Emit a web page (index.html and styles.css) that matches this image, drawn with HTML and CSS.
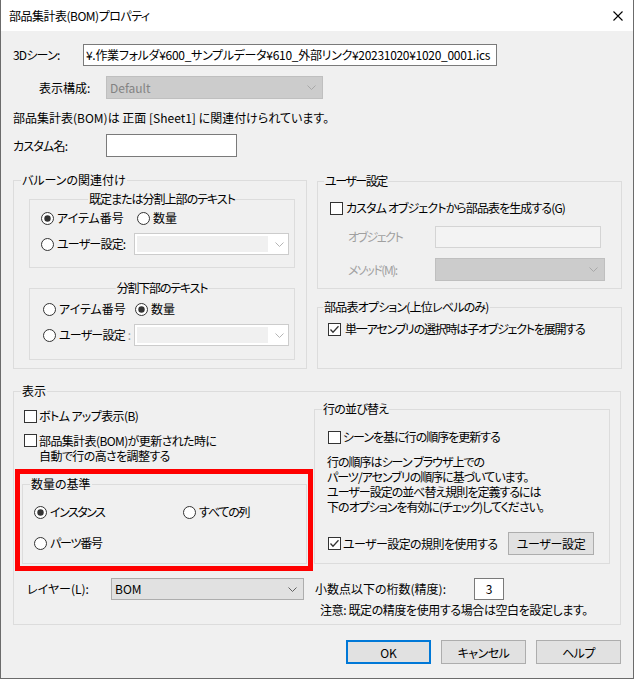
FILE: index.html
```html
<!DOCTYPE html>
<html lang="ja">
<head>
<meta charset="utf-8">
<title>部品集計表(BOM)プロパティ</title>
<link rel="stylesheet" href="styles.css">
</head>
<body>
<div class="window">
  <div class="titlebar">
    <span class="title t5">部品集計表(BOM)プロパティ</span>
    <svg class="close" width="10" height="10" viewBox="0 0 10 10"><path d="M0.5 0.5L9.5 9.5M9.5 0.5L0.5 9.5" stroke="#000" stroke-width="1.1" fill="none"/></svg>
  </div>
  <div class="content">
    <div class="row row-scene">
      <span class="lbl lbl-scene t8">3Dシーン:</span>
      <div class="textbox scene-path t3">¥.作業フォルダ¥600_サンプルデータ¥610_外部リンク¥20231020¥1020_0001.ics</div>
    </div>
    <div class="row row-config">
      <span class="lbl lbl-config">表示構成:</span>
      <div class="select select-dis config-select"><span class="sel-text">Default</span><svg class="chev" width="9" height="5" viewBox="0 0 9 5"><path d="M0.5 0.5L4.5 4.5L8.5 0.5" fill="none" stroke="#a8a8a8"/></svg></div>
    </div>
    <p class="note">部品集計表(BOM)は 正面 [Sheet1] に関連付けられています。</p>
    <div class="row row-name">
      <span class="lbl lbl-name t8">カスタム名:</span>
      <div class="textbox name-box"></div>
    </div>

    <div class="cols">
      <div class="group balloon">
        <span class="gtitle">バルーンの関連付け</span>
        <div class="group sub sub1">
          <span class="gtitle center t10">既定または分割上部のテキスト</span>
          <div class="optrow r16">
            <label class="opt w96"><svg class="rb" viewBox="0 0 13 13"><circle cx="6.5" cy="6.5" r="6" fill="#fff" stroke="#333"/><circle cx="6.5" cy="6.5" r="3.2" fill="#333"/></svg>アイテム番号</label>
            <label class="opt"><svg class="rb" viewBox="0 0 13 13"><circle cx="6.5" cy="6.5" r="6" fill="#fff" stroke="#333"/></svg>数量</label>
          </div>
          <div class="optrow r22 mt7">
            <label class="opt w93 t8"><svg class="rb" viewBox="0 0 13 13"><circle cx="6.5" cy="6.5" r="6" fill="#fff" stroke="#333"/></svg>ユーザー設定:</label>
            <div class="combo-dis"><span class="combo-field"></span><svg class="chev" width="9" height="5" viewBox="0 0 9 5"><path d="M0.5 0.5L4.5 4.5L8.5 0.5" fill="none" stroke="#b5b5b5"/></svg></div>
          </div>
        </div>
        <div class="group sub sub2">
          <span class="gtitle center t12">分割下部のテキスト</span>
          <div class="optrow r16">
            <label class="opt w92"><svg class="rb" viewBox="0 0 13 13"><circle cx="6.5" cy="6.5" r="6" fill="#fff" stroke="#333"/></svg>アイテム番号</label>
            <label class="opt"><svg class="rb" viewBox="0 0 13 13"><circle cx="6.5" cy="6.5" r="6" fill="#fff" stroke="#333"/><circle cx="6.5" cy="6.5" r="3.2" fill="#333"/></svg>数量</label>
          </div>
          <div class="optrow r22 mt7">
            <label class="opt w91 t8"><svg class="rb" viewBox="0 0 13 13"><circle cx="6.5" cy="6.5" r="6" fill="#fff" stroke="#333"/></svg>ユーザー設定<span class="dim">:</span></label>
            <div class="combo-dis"><span class="combo-field"></span><svg class="chev" width="9" height="5" viewBox="0 0 9 5"><path d="M0.5 0.5L4.5 4.5L8.5 0.5" fill="none" stroke="#b5b5b5"/></svg></div>
          </div>
        </div>
      </div>

      <div class="rightcol">
        <div class="group usercfg">
          <span class="gtitle t15">ユーザー設定</span>
          <label class="opt r16 t9"><svg class="cb" viewBox="0 0 13 13"><rect x="0.5" y="0.5" width="12" height="12" fill="#fff" stroke="#333"/></svg>カスタム オブジェクトから部品表を生成する(G)</label>
          <div class="fieldrow r22">
            <span class="lbl dim w87 t15">オブジェクト</span>
            <div class="textbox-dis"></div>
          </div>
          <div class="fieldrow r23">
            <span class="lbl dim w87 t15">メソッド(M):</span>
            <div class="select select-dis method-select"><span class="sel-text"></span><svg class="chev" width="9" height="5" viewBox="0 0 9 5"><path d="M0.5 0.5L4.5 4.5L8.5 0.5" fill="none" stroke="#a8a8a8"/></svg></div>
          </div>
        </div>
        <div class="group bomopt">
          <span class="gtitle t8">部品表オプション(上位レベルのみ)</span>
          <label class="opt r16 gap4 t12"><svg class="cb" viewBox="0 0 13 13"><rect x="0.5" y="0.5" width="12" height="12" fill="#fff" stroke="#333"/><path d="M2.5 6.5L5 9.2L10.5 3.3" fill="none" stroke="#333" stroke-width="1.3"/></svg>単一アセンブリの選択時は子オブジェクトを展開する</label>
        </div>
      </div>
    </div>

    <div class="group display">
      <span class="gtitle">表示</span>
      <div class="disp-main">
        <div class="disp-left">
          <label class="opt r16 gap2 cb1 t6"><svg class="cb" viewBox="0 0 13 13"><rect x="0.5" y="0.5" width="12" height="12" fill="#fff" stroke="#333"/></svg>ボトム アップ表示(B)</label>
          <label class="opt2 cb2"><svg class="cb" viewBox="0 0 13 13"><rect x="0.5" y="0.5" width="12" height="12" fill="#fff" stroke="#333"/></svg><span class="two-lines t6">部品集計表(BOM)が更新された時に<br>自動で行の高さを調整する</span></label>
          <div class="highlight">
            <div class="group qty">
              <span class="gtitle">数量の基準</span>
              <div class="optrow r16">
                <label class="opt w149 t15"><svg class="rb" viewBox="0 0 13 13"><circle cx="6.5" cy="6.5" r="6" fill="#fff" stroke="#333"/><circle cx="6.5" cy="6.5" r="3.2" fill="#333"/></svg>インスタンス</label>
                <label class="opt t12"><svg class="rb" viewBox="0 0 13 13"><circle cx="6.5" cy="6.5" r="6" fill="#fff" stroke="#333"/></svg>すべての列</label>
              </div>
              <div class="optrow r16 mt15">
                <label class="opt t12"><svg class="rb" viewBox="0 0 13 13"><circle cx="6.5" cy="6.5" r="6" fill="#fff" stroke="#333"/></svg>パーツ番号</label>
              </div>
            </div>
          </div>
        </div>
        <div class="group sort">
          <span class="gtitle t8">行の並び替え</span>
          <label class="opt r16 gap2 t10"><svg class="cb" viewBox="0 0 13 13"><rect x="0.5" y="0.5" width="12" height="12" fill="#fff" stroke="#333"/></svg>シーンを基に行の順序を更新する</label>
          <p class="sort-text t10">行の順序はシーン ブラウザ上での<br>パーツ/アセンブリの順序に基づいています。<br>ユーザー設定の並べ替え規則を定義するには<br>下のオプションを有効に(チェック)してください。</p>
          <div class="sort-bottom">
            <label class="opt gap2 t6"><svg class="cb" viewBox="0 0 13 13"><rect x="0.5" y="0.5" width="12" height="12" fill="#fff" stroke="#333"/><path d="M2.5 6.5L5 9.2L10.5 3.3" fill="none" stroke="#333" stroke-width="1.3"/></svg>ユーザー設定の規則を使用する</label>
            <div class="btn btn-user">ユーザー設定</div>
          </div>
        </div>
      </div>
      <div class="disp-bottom">
        <span class="lbl w84">レイヤー(L):</span>
        <div class="select layer-select"><span class="sel-text">BOM</span><svg class="chev" width="9" height="5" viewBox="0 0 9 5"><path d="M0.5 0.5L4.5 4.5L8.5 0.5" fill="none" stroke="#606060"/></svg></div>
        <span class="lbl prec-lbl">小数点以下の桁数(精度):</span>
        <div class="textbox prec-box">3</div>
      </div>
      <p class="prec-note t4">注意: 既定の精度を使用する場合は空白を設定します。</p>
    </div>

    <div class="buttons">
      <div class="btn btn-main btn-ok">OK</div>
      <div class="btn btn-main t5">キャンセル</div>
      <div class="btn btn-main t5">ヘルプ</div>
    </div>
  </div>
</div>
</body>
</html>
```

FILE: styles.css
```css
* { box-sizing: border-box; }
html, body { margin: 0; padding: 0; }
body {
  width: 634px;
  height: 679px;
  overflow: hidden;
  background: #f0f0f0;
  font-family: "Noto Sans CJK JP", "Noto Sans", sans-serif;
  font-size: 12px;
  color: #000;
  font-feature-settings: "palt";
}
.window {
  width: 634px;
  height: 679px;
  background: #f0f0f0;
  border-left: 1px solid #6b6b6b;
  border-right: 1px solid #6b6b6b;
  border-bottom: 1px solid #6b6b6b;
}
.titlebar {
  height: 31px;
  background: #fff;
  display: flex;
  align-items: center;
  padding-left: 8px;
}
.title { line-height: 16px; }
.close { margin-left: auto; margin-right: 10px; }

.content { padding-left: 12px; }

/* letter-spacing tweaks to approximate the narrower UI font */
.t3 { letter-spacing: -0.3px; }
.t4 { letter-spacing: -0.4px; }
.t5 { letter-spacing: -0.5px; }
.t6 { letter-spacing: -0.6px; }
.t8 { letter-spacing: -0.8px; }
.t9 { letter-spacing: -0.9px; }
.t10 { letter-spacing: -1px; }
.t12 { letter-spacing: -1.2px; }
.t15 { letter-spacing: -1.5px; }

.row { display: flex; align-items: center; }
.lbl { display: inline-block; line-height: 16px; white-space: nowrap; flex: none; }
.dim { color: #a0a0a0; }

.row-scene { margin-top: 13px; height: 22px; }
.lbl-scene { width: 70px; }
.textbox {
  background: #fff;
  border: 1px solid #7a7a7a;
  height: 22px;
  line-height: 20px;
  white-space: nowrap;
  overflow: hidden;
  flex: none;
}
.scene-path { width: 414px; padding-left: 2px; }

.row-config { margin-top: 10px; height: 23px; padding-left: 26px; }
.lbl-config { width: 67px; }

.select {
  display: flex;
  align-items: center;
  height: 22px;
  border: 1px solid #adadad;
  background: #e1e1e1;
  padding-left: 3px;
  padding-right: 6px;
  flex: none;
}
.select .sel-text { flex: 1; line-height: 16px; }
.select-dis { background: #cccccc; border-color: #bfbfbf; color: #838383; height: 23px; }
.config-select { width: 217px; }
.method-select { width: 170px; }
.layer-select { width: 193px; }

.note { margin: 11px 0 0; line-height: 16px; }

.row-name { margin-top: 8px; height: 23px; }
.lbl-name { width: 93px; }
.name-box { width: 131px; height: 23px; }

.cols { display: flex; margin-top: 23px; }

.group { position: relative; border: 1px solid #dcdcdc; flex: none; }
.gtitle {
  position: absolute;
  top: -9px;
  left: 7px;
  padding: 0 1px;
  line-height: 16px;
  background: #f0f0f0;
  white-space: nowrap;
}
.gtitle.center { left: 50%; transform: translateX(-50%); }

.balloon { width: 294px; height: 189px; padding-top: 18px; padding-left: 15px; }
.sub1 { width: 266px; height: 69px; padding-top: 10px; padding-left: 11px; }
.sub2 { width: 266px; height: 72px; margin-top: 20px; padding-top: 12px; padding-left: 13px; }

.optrow { display: flex; align-items: center; }
.r16 { height: 16px; }
.r22 { height: 22px; }
.r23 { height: 23px; }
.mt7 { margin-top: 7px; }
.mt15 { margin-top: 15px; }

.opt { display: flex; align-items: center; gap: 3px; line-height: 16px; white-space: nowrap; flex: none; }
.gap2 { gap: 2px; }
.gap4 { gap: 4px; }
.w96 { width: 96px; }
.w93 { width: 93px; }
.w92 { width: 92px; }
.w91 { width: 91px; }
.w149 { width: 149px; }
.w87 { width: 87px; }
.w84 { width: 84px; }

.rb, .cb { width: 13px; height: 13px; flex: none; display: block; }

.combo-dis {
  display: flex;
  align-items: center;
  width: 155px;
  height: 22px;
  border: 1px solid #cccccc;
  background: #fff;
  padding: 2px;
  letter-spacing: 0;
}
.combo-field { width: 131px; height: 16px; background: #f0f0f0; }
.combo-dis .chev { margin-left: 7px; }

.rightcol { margin-left: 10px; width: 305px; }
.usercfg { margin-top: 1px; height: 108px; padding-top: 18px; padding-left: 12px; }
.usercfg .gtitle { left: 6px; }
.fieldrow { display: flex; align-items: center; margin-top: 10px; padding-left: 18px; }
.textbox-dis { width: 166px; height: 22px; border: 1px solid #d4d4d4; background: #f3f3f3; }

.bomopt { margin-top: 18px; height: 62px; padding-top: 13px; padding-left: 10px; }
.bomopt .gtitle { left: 5px; }

.display { margin-top: 22px; width: 608px; height: 234px; }
.disp-main { display: flex; align-items: flex-start; }
.disp-left { width: 299px; padding-top: 16px; flex: none; }
.cb1 { margin-left: 10px; }
.opt2 { display: flex; align-items: flex-start; gap: 2px; margin-top: 9px; margin-left: 10px; height: 30px; }
.opt2 .cb { margin-top: 1px; }
.two-lines { line-height: 15px; white-space: nowrap; }

.highlight {
  margin-top: 6px;
  margin-left: 1px;
  width: 298px;
  height: 102px;
  border: 5px solid #ff0000;
  padding-top: 10px;
  padding-left: 2px;
}
.qty { width: 285px; height: 80px; padding-top: 19px; padding-left: 11px; }

.sort { margin-left: 1px; margin-top: 17px; width: 296px; height: 155px; padding-top: 19px; padding-left: 13px; }
.sort-text { margin: 9px 0 0 -1px; line-height: 15px; white-space: nowrap; }
.sort-bottom { display: flex; align-items: center; height: 23px; margin-top: 18px; margin-right: 15px; }
.btn {
  display: flex;
  align-items: center;
  justify-content: center;
  background: #e1e1e1;
  border: 1px solid #adadad;
  white-space: nowrap;
  flex: none;
}
.btn-user { margin-left: auto; width: 86px; height: 23px; letter-spacing: -0.3px; }

.disp-bottom { display: flex; align-items: center; height: 22px; margin-top: 7px; padding-left: 13px; }
.prec-lbl { margin-left: 11px; width: 159px; }
.prec-box { width: 30px; text-align: center; }
.prec-note { margin: 2px 0 0 306px; line-height: 16px; white-space: nowrap; }

.buttons { display: flex; justify-content: flex-end; gap: 10px; margin-top: 15px; padding-right: 12px; }
.btn-main { width: 85px; height: 24px; }
.btn-ok { border: 2px solid #0078d7; }
```
